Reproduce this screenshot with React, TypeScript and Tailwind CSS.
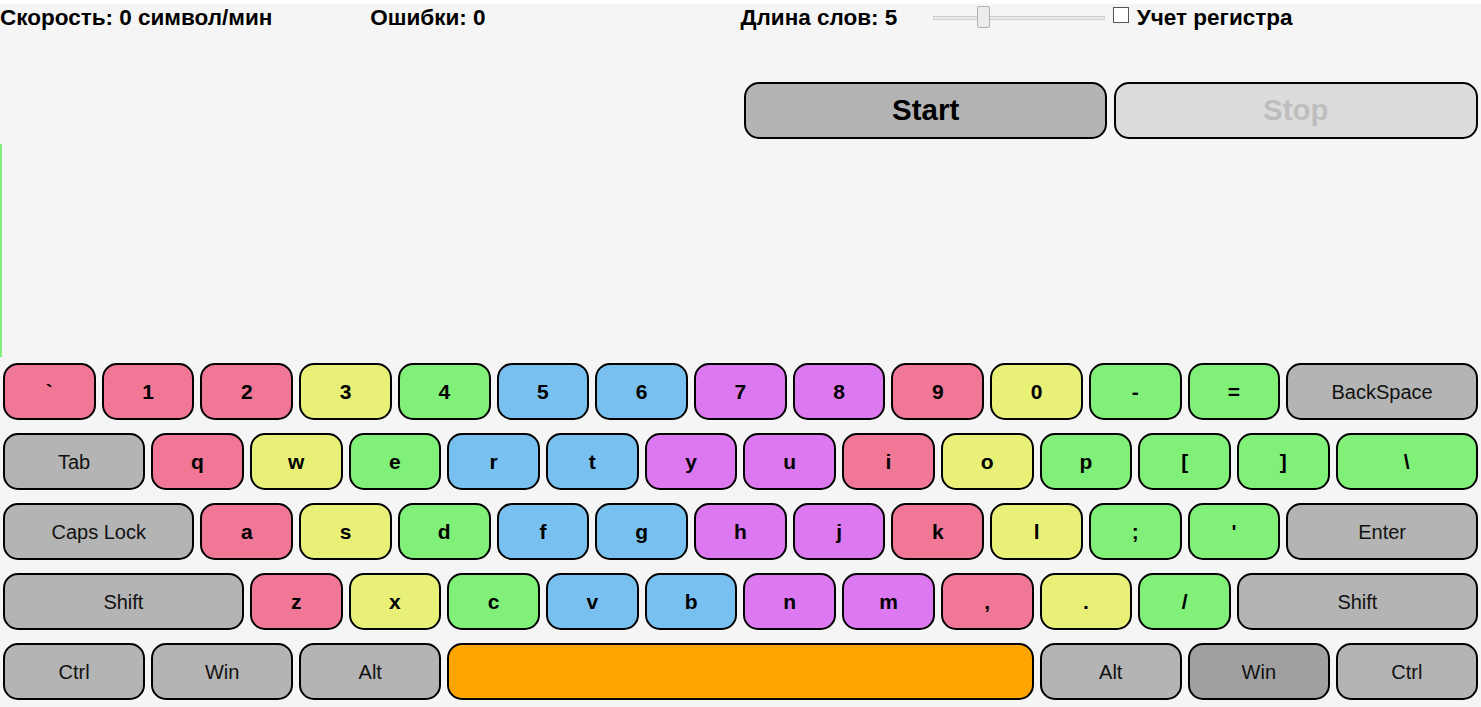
import React from 'react';

type Tone = 'pink' | 'yellow' | 'green' | 'blue' | 'purple' | 'gray' | 'dark' | 'orange';

interface KeyDef {
  label: string;
  tone: Tone;
  size?: 1 | 1.5 | 2 | 2.5 | 6;
}

const toneClass: Record<Tone, string> = {
  pink: 'bg-[#f07896] font-bold text-[21px]',
  yellow: 'bg-[#e8f078] font-bold text-[21px]',
  green: 'bg-[#80f078] font-bold text-[21px]',
  blue: 'bg-[#78c0f0] font-bold text-[21px]',
  purple: 'bg-[#dc78f0] font-bold text-[21px]',
  gray: 'bg-[#b4b4b4] font-normal text-[20px] text-[#111]',
  dark: 'bg-[#a0a0a0] font-normal text-[20px] text-[#111]',
  orange: 'bg-[#ffa500]',
};

const widthClass: Record<number, string> = {
  1: 'w-[6.6667%]',
  1.5: 'w-[10%]',
  2: 'w-[13.3333%]',
  2.5: 'w-[16.6667%]',
  6: 'w-[40%]',
};

const k = (label: string, tone: Tone, size: KeyDef['size'] = 1): KeyDef => ({ label, tone, size });

const rows: KeyDef[][] = [
  [
    k('`', 'pink'), k('1', 'pink'), k('2', 'pink'), k('3', 'yellow'), k('4', 'green'),
    k('5', 'blue'), k('6', 'blue'), k('7', 'purple'), k('8', 'purple'), k('9', 'pink'),
    k('0', 'yellow'), k('-', 'green'), k('=', 'green'), k('BackSpace', 'gray', 2),
  ],
  [
    k('Tab', 'gray', 1.5), k('q', 'pink'), k('w', 'yellow'), k('e', 'green'), k('r', 'blue'),
    k('t', 'blue'), k('y', 'purple'), k('u', 'purple'), k('i', 'pink'), k('o', 'yellow'),
    k('p', 'green'), k('[', 'green'), k(']', 'green'), k('\\', 'green', 1.5),
  ],
  [
    k('Caps Lock', 'gray', 2), k('a', 'pink'), k('s', 'yellow'), k('d', 'green'), k('f', 'blue'),
    k('g', 'blue'), k('h', 'purple'), k('j', 'purple'), k('k', 'pink'), k('l', 'yellow'),
    k(';', 'green'), k("'", 'green'), k('Enter', 'gray', 2),
  ],
  [
    k('Shift', 'gray', 2.5), k('z', 'pink'), k('x', 'yellow'), k('c', 'green'), k('v', 'blue'),
    k('b', 'blue'), k('n', 'purple'), k('m', 'purple'), k(',', 'pink'), k('.', 'yellow'),
    k('/', 'green'), k('Shift', 'gray', 2.5),
  ],
  [
    k('Ctrl', 'gray', 1.5), k('Win', 'gray', 1.5), k('Alt', 'gray', 1.5), k('', 'orange', 6),
    k('Alt', 'gray', 1.5), k('Win', 'dark', 1.5), k('Ctrl', 'gray', 1.5),
  ],
];

function Key({ def }: { def: KeyDef }) {
  return (
    <div className={`${widthClass[def.size ?? 1]} px-[3px]`}>
      <div
        className={`h-[57px] flex items-center justify-center rounded-[15px] border-2 border-black ${toneClass[def.tone]}`}
      >
        {def.label}
      </div>
    </div>
  );
}

export default function App() {
  return (
    <div className="bg-white pt-[4px] font-['Liberation_Sans',Arial,sans-serif] text-black">
      <div className="bg-[#f5f5f5] h-[703px] overflow-hidden">
        {/* Stats */}
        <div className="h-[78px] pt-[2px] grid grid-cols-4 text-[22.5px] leading-[24px] font-bold">
          <div>Скорость: 0 символ/мин</div>
          <div>Ошибки: 0</div>
          <div className="flex">
            <span>Длина слов: 5</span>
            <div className="relative ml-[36px] mt-[10px] w-[172px] h-[4px] bg-[#e9e9e9] border border-[#d0d0d0]">
              <div className="absolute left-[43px] top-[-11px] w-[13px] h-[22px] bg-[#ececec] border border-[#b0b0b0] rounded-[2px]" />
            </div>
          </div>
          <div className="flex">
            <div className="ml-[2px] mt-[1px] w-[16px] h-[16px] bg-white border border-[#555]" />
            <span className="ml-[8px]">Учет регистра</span>
          </div>
        </div>

        {/* Controls */}
        <div className="grid grid-cols-4 h-[57px]">
          <div className="col-start-3 px-[3.5px]">
            <button className="w-full h-full rounded-[15px] border-2 border-black bg-[#b4b4b4] text-[29.5px] font-bold">
              Start
            </button>
          </div>
          <div className="px-[3.5px]">
            <button className="w-full h-full rounded-[15px] border-2 border-black bg-[#dcdcdc] text-[29.5px] font-bold text-[#bdbdbd]">
              Stop
            </button>
          </div>
        </div>

        {/* Text field cursor */}
        <div className="mt-[5px] w-[2px] h-[213px] bg-[#80ee80]" />

        {/* Keyboard */}
        <div>
          {rows.map((row, i) => (
            <div key={i} className="flex pt-[6px] pb-[7px]">
              {row.map((def, j) => (
                <Key key={j} def={def} />
              ))}
            </div>
          ))}
        </div>
      </div>
    </div>
  );
}
